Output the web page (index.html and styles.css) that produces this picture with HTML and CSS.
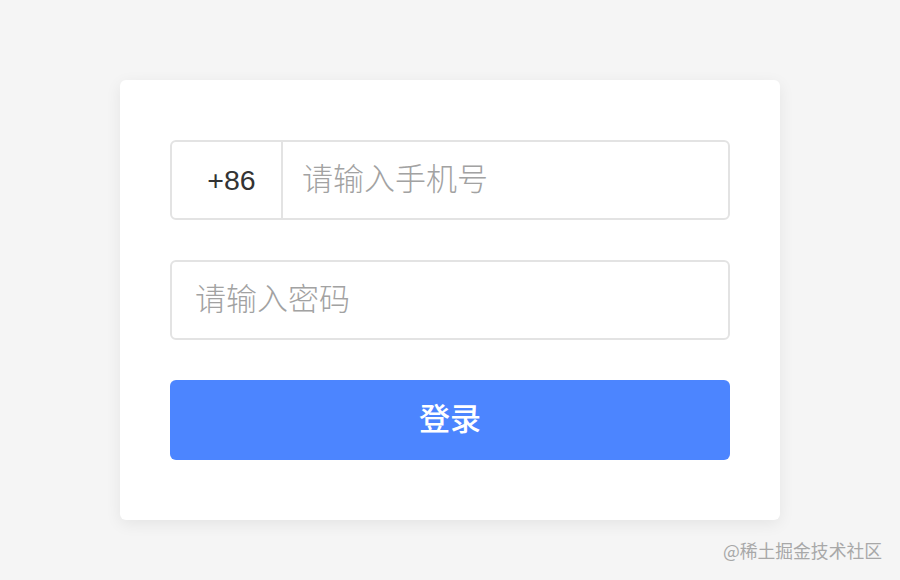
FILE: index.html
```html
<!DOCTYPE html>
<html lang="zh-CN">
<head>
<meta charset="utf-8">
<link rel="stylesheet" href="styles.css">
</head>
<body>
<div class="page">
  <form class="card">
    <div class="field">
      <span class="prefix">+86</span>
      <input class="input input-phone" type="text" placeholder="请输入手机号">
    </div>
    <div class="field">
      <input class="input" type="password" placeholder="请输入密码">
    </div>
    <button class="btn" type="button">登录</button>
  </form>
  <div class="watermark">@稀土掘金技术社区</div>
</div>
</body>
</html>
```
FILE: styles.css
```css
* { box-sizing: border-box; }
html, body {
  margin: 0;
  height: 100%;
  background: #f5f5f5;
  font-family: "Noto Sans CJK SC", "Noto Sans", sans-serif;
}
.page {
  position: relative;
  height: 580px;
  padding-top: 80px;
}
.card {
  width: 660px;
  margin: 0 auto;
  background: #fff;
  border-radius: 6px;
  box-shadow: 0 4px 16px rgba(0, 0, 0, 0.07);
  padding: 60px 50px;
  display: flex;
  flex-direction: column;
  gap: 40px;
}
.field {
  display: flex;
  align-items: center;
  height: 80px;
  border: 2px solid #e3e3e3;
  border-radius: 6px;
  background: #fff;
}
.prefix {
  width: 111px;
  height: 100%;
  flex: none;
  display: flex;
  align-items: center;
  justify-content: center;
  padding-left: 10px;
  border-right: 2px solid #e3e3e3;
  font-family: "Liberation Sans", "Noto Sans", sans-serif;
  font-size: 28.5px;
  color: #333;
}
.input {
  flex: 1;
  height: 100%;
  border: 0;
  outline: 0;
  background: transparent;
  padding: 0 23px 7px;
  font-family: "Noto Sans CJK SC", sans-serif;
  font-size: 31px;
  font-weight: 300;
  color: #333;
}
.input-phone { padding-left: 19px; }
.input::placeholder { color: #a2a2a2; }
.btn {
  height: 80px;
  border: 0;
  border-radius: 6px;
  background: #4c85ff;
  color: #fff;
  padding: 0 0 8px;
  font-family: "Noto Sans CJK SC", sans-serif;
  font-size: 31px;
  font-weight: 500;
  cursor: pointer;
}
.watermark {
  position: absolute;
  right: 18px;
  bottom: 17px;
  font-size: 17.8px;
  color: #a8a8a8;
  font-family: "Noto Sans CJK SC", sans-serif;
}
```
